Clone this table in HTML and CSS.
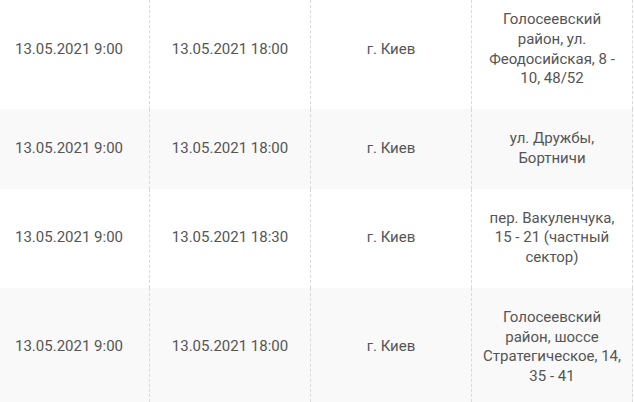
FILE: index.html
```html
<!DOCTYPE html>
<html lang="ru">
<head>
<meta charset="utf-8">
<title>Отключения</title>
<link rel="stylesheet" href="styles.css">
</head>
<body>
<table class="schedule">
  <tbody>
    <tr class="row">
      <td class="cell">13.05.2021 9:00</td>
      <td class="cell">13.05.2021 18:00</td>
      <td class="cell">г. Киев</td>
      <td class="cell addr">Голосеевский район, ул. Феодосийская, 8 - 10, 48/52</td>
    </tr>
    <tr class="row alt">
      <td class="cell">13.05.2021 9:00</td>
      <td class="cell">13.05.2021 18:00</td>
      <td class="cell">г. Киев</td>
      <td class="cell addr">ул. Дружбы, Бортничи</td>
    </tr>
    <tr class="row">
      <td class="cell">13.05.2021 9:00</td>
      <td class="cell">13.05.2021 18:30</td>
      <td class="cell">г. Киев</td>
      <td class="cell addr">пер. Вакуленчука, 15 - 21 (частный сектор)</td>
    </tr>
    <tr class="row alt">
      <td class="cell">13.05.2021 9:00</td>
      <td class="cell">13.05.2021 18:00</td>
      <td class="cell">г. Киев</td>
      <td class="cell addr">Голосеевский район, шоссе Стратегическое, 14, 35 - 41</td>
    </tr>
  </tbody>
</table>
</body>
</html>
```

FILE: styles.css
```css
html, body {
  margin: 0;
  padding: 0;
  background: #ffffff;
}

body {
  font-family: Roboto, "Liberation Sans", Arial, sans-serif;
  font-size: 15px;
  line-height: 19.75px;
  color: #555555;
}

.schedule {
  border-collapse: collapse;
  table-layout: fixed;
  margin: -10px 0 0 -11px;
}

.row {
  background: #ffffff;
}

.row.alt {
  background: #f9f9f9;
}

.cell {
  width: 140px;
  padding: 20px 10px;
  text-align: center;
  vertical-align: middle;
  border-right: 1px dashed #d9d9d9;
}
```
